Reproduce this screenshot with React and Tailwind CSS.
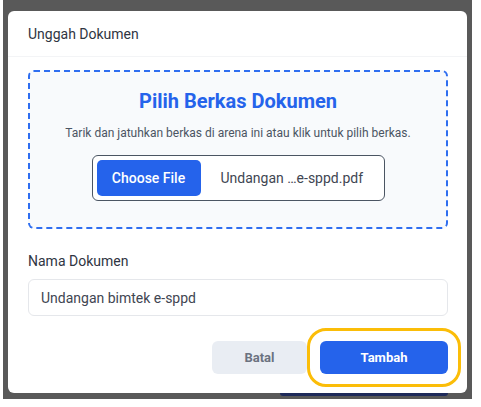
export default function App() {
  return (
    <div className="w-[481px] h-[407px] bg-white" style={{ fontFamily: "Roboto, 'Noto Sans', sans-serif" }}>
      <div className="relative ml-[3px] w-[469px] h-[399px] bg-[#595959] pt-[11px] pl-[5px]">
        <div className="absolute left-[277px] top-[393px] w-[168px] h-[3px] rounded-b bg-[#1e2a5a]" />
        <div className="w-[459px] h-[382px] bg-white rounded-md flex flex-col">
          <div className="h-[46px] px-5 flex items-center border-b border-gray-100">
            <span className="text-sm text-[#2f3542]">Unggah Dokumen</span>
          </div>
          <div className="pl-5 pr-[19px] pt-[13px]">
            <div className="h-[159px] rounded-md border-2 border-dashed border-[#2f6ef0] bg-[#f8fafc] flex flex-col items-center">
              <div className="mt-[15px] text-xl font-bold leading-7 text-[#2563eb]">Pilih Berkas Dokumen</div>
              <div className="mt-[10px] text-xs leading-4 text-[#4b5563]">Tarik dan jatuhkan berkas di arena ini atau klik untuk pilih berkas.</div>
              <div className="mt-[14px] w-[293px] h-[46px] rounded-md border border-[#4b5563] bg-white flex items-center pl-[4px]">
                <div className="w-[104px] h-[36px] rounded-[5px] bg-[#2563eb] text-white text-sm font-medium flex items-center justify-center">Choose File</div>
                <div className="ml-[20px] text-sm text-[#3f4652]">Undangan …e-sppd.pdf</div>
              </div>
            </div>
            <div className="mt-[22px] text-sm leading-5 text-[#2f3542]">Nama Dokumen</div>
            <div className="mt-[8px] h-[37px] rounded-md border border-gray-200 flex items-center px-3 text-sm text-[#3f4652]">Undangan bimtek e-sppd</div>
            <div className="mt-[25px] flex justify-end gap-[13px]">
              <button className="w-[95px] h-[33px] rounded-md bg-[#e9edf3] text-[13px] font-bold text-[#6b7280]">Batal</button>
              <button className="w-[128px] h-[33px] rounded-md bg-[#2563eb] text-[13px] font-bold text-white outline-[3px] outline-solid outline-offset-[10px] outline-[#fbbd08]">Tambah</button>
            </div>
          </div>
        </div>
      </div>
    </div>
  );
}
